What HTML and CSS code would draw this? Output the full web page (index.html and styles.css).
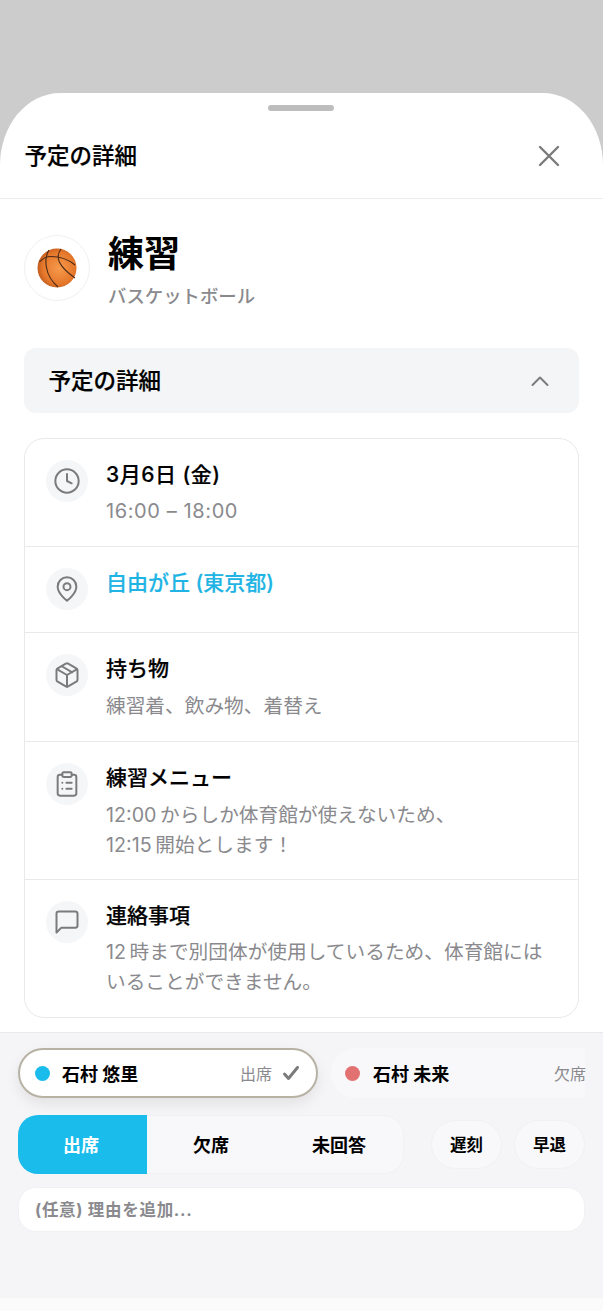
FILE: index.html
```html
<!DOCTYPE html>
<html lang="ja">
<head>
    <meta charset="UTF-8">
    <meta name="viewport" content="width=device-width, initial-scale=1.0">
    <title>予定の詳細</title>
    <link rel="stylesheet" href="styles.css">
</head>
<body>

<div class="sheet">
    <div class="grabber"></div>

    <!-- Header -->
    <header class="sheet-header">
        <h2>予定の詳細</h2>
        <svg class="close-icon" width="28" height="28" viewBox="0 0 28 28" fill="none" stroke="#7b7b7b" stroke-width="2.4" stroke-linecap="round">
            <path d="M5 5L23 23M23 5L5 23"/>
        </svg>
    </header>

    <div class="sheet-body">
        <!-- Event title -->
        <div class="event">
            <div class="event-icon">
                <svg width="40" height="40" viewBox="0 0 40 40" fill="none">
                    <defs>
                        <radialGradient id="ball" cx="0.55" cy="0.5" r="0.6">
                            <stop offset="0" stop-color="#f79a4c"/>
                            <stop offset="0.7" stop-color="#e5772a"/>
                            <stop offset="1" stop-color="#b4501a"/>
                        </radialGradient>
                    </defs>
                    <ellipse cx="20" cy="20" rx="19.500" ry="19.500" fill="url(#ball)"/>
                    <g stroke="#4a2a17" stroke-width="1.100">
                        <path d="M2.500 14C6 10 10 8.500 14 8.500C22 8.500 31 11 38 17"/>
                        <path d="M12 2C7 10 7 27 21 39"/>
                        <path d="M24 1C18 9 21 18 38 30"/>
                    </g>
                </svg>
            </div>
            <div>
                <h1>練習</h1>
                <p class="event-sub">バスケットボール</p>
            </div>
        </div>

        <!-- Collapsible section -->
        <div class="section-head">
            <span class="section-title">予定の詳細</span>
            <svg width="22" height="22" viewBox="0 0 22 22" fill="none" stroke="#7b7b7b" stroke-width="2" stroke-linecap="round" stroke-linejoin="round">
                <path d="M3.500 15L11 7.500L18.500 15"/>
            </svg>
        </div>

        <div class="card">
            <div class="row row-date">
                <div class="row-icon">
                    <svg width="28" height="28" viewBox="0 0 24 24" fill="none" stroke="#7b7b7b" stroke-width="1.700" stroke-linecap="round" stroke-linejoin="round">
                        <circle cx="12" cy="12" r="10"/>
                        <path d="M12 6v6l4 2"/>
                    </svg>
                </div>
                <div>
                    <div class="row-title">3月6日 (金)</div>
                    <div class="row-text">16:00 – 18:00</div>
                </div>
            </div>
            <div class="row row-place">
                <div class="row-icon">
                    <svg width="28" height="28" viewBox="0 0 24 24" fill="none" stroke="#7b7b7b" stroke-width="1.700" stroke-linecap="round" stroke-linejoin="round">
                        <path d="M20 10c0 6-8 12-8 12s-8-6-8-12a8 8 0 0 1 16 0z"/>
                        <circle cx="12" cy="10" r="3"/>
                    </svg>
                </div>
                <div class="row-title row-link">自由が丘 (東京都)</div>
            </div>
            <div class="row row-items">
                <div class="row-icon">
                    <svg width="28" height="28" viewBox="0 0 24 24" fill="none" stroke="#7b7b7b" stroke-width="1.700" stroke-linecap="round" stroke-linejoin="round">
                        <path d="M21 16V8a2 2 0 0 0-1-1.730l-7-4a2 2 0 0 0-2 0l-7 4A2 2 0 0 0 3 8v8a2 2 0 0 0 1 1.730l7 4a2 2 0 0 0 2 0l7-4A2 2 0 0 0 21 16z"/>
                        <path d="M3.300 7L12 12l8.700-5M12 22V12M7.500 4.500l9 5.200"/>
                    </svg>
                </div>
                <div>
                    <div class="row-title">持ち物</div>
                    <div class="row-text">練習着、飲み物、着替え</div>
                </div>
            </div>
            <div class="row row-menu">
                <div class="row-icon">
                    <svg width="28" height="28" viewBox="0 0 24 24" fill="none" stroke="#7b7b7b" stroke-width="1.700" stroke-linecap="round" stroke-linejoin="round">
                        <path d="M16 4h2a2 2 0 0 1 2 2v14a2 2 0 0 1-2 2H6a2 2 0 0 1-2-2V6a2 2 0 0 1 2-2h2"/>
                        <rect x="8" y="2" width="8" height="4" rx="1"/>
                        <path d="M8 11h.01M8 16h.01M11.500 11H16M11.500 16H16"/>
                    </svg>
                </div>
                <div>
                    <div class="row-title">練習メニュー</div>
                    <div class="row-text">12:00 からしか体育館が使えないため、<br>12:15 開始とします！</div>
                </div>
            </div>
            <div class="row row-note">
                <div class="row-icon">
                    <svg width="28" height="28" viewBox="0 0 24 24" fill="none" stroke="#7b7b7b" stroke-width="1.700" stroke-linecap="round" stroke-linejoin="round">
                        <path d="M21 15a2 2 0 0 1-2 2H7l-4 4V5a2 2 0 0 1 2-2h14a2 2 0 0 1 2 2z"/>
                    </svg>
                </div>
                <div>
                    <div class="row-title">連絡事項</div>
                    <div class="row-text">12 時まで別団体が使用しているため、体育館にはいることができません。</div>
                </div>
            </div>
        </div>
    </div>

    <!-- Attendance panel -->
    <div class="panel">
        <div class="members">
            <div class="member member-active">
                <span class="dot dot-blue"></span>
                <span class="member-name">石村 悠里</span>
                <span class="member-status">出席</span>
                <svg width="18" height="16" viewBox="0 0 18 16" fill="none" stroke="#7b7b7b" stroke-width="3" stroke-linecap="round" stroke-linejoin="round">
                    <path d="M2.500 9L6.500 13.500L15.500 2.500"/>
                </svg>
            </div>
            <div class="member">
                <span class="dot dot-red"></span>
                <span class="member-name">石村 未来</span>
                <span class="member-status">欠席</span>
            </div>
        </div>

        <div class="answers">
            <div class="segment">
                <button class="seg-btn seg-on">出席</button>
                <button class="seg-btn">欠席</button>
                <button class="seg-btn">未回答</button>
            </div>
            <button class="pill">遅刻</button>
            <button class="pill">早退</button>
        </div>

        <input class="reason" type="text" placeholder="(任意) 理由を追加...">
    </div>
    <div class="sheet-foot"></div>
</div>

</body>
</html>
```

FILE: styles.css
```css
html, body {
    height: 100%;
}
body {
    font-family: Inter, "Noto Sans CJK JP", sans-serif;
    background-color: #cccccc;
    margin: 0;
    padding: 93px 0 0;
    box-sizing: border-box;
    color: #000;
    overflow: hidden;
}
.sheet {
    height: 1218px;
    background-color: #fff;
    border-radius: 60px 60px 0 0 / 72px 72px 0 0;
    position: relative;
    display: flex;
    flex-direction: column;
    overflow: hidden;
}
.grabber {
    position: absolute;
    top: 12px;
    left: 268px;
    width: 66px;
    height: 6px;
    border-radius: 3px;
    background-color: #bdbdbd;
}
.sheet-header {
    height: 106px;
    box-sizing: border-box;
    padding: 33px 40px 0 24.500px;
    border-bottom: 1px solid #ececee;
    display: flex;
    justify-content: space-between;
}
.sheet-header h2 {
    margin: 0;
    font-size: 22.500px;
    font-weight: 500;
    -webkit-text-stroke: 0.2px #000;
    line-height: 60px;
    height: 60px;
}
.close-icon {
    margin-top: 16px;
}
.sheet-body {
    padding: 36px 24px 0;
    flex: none;
    height: 833px;
    box-sizing: border-box;
}
.event {
    display: flex;
    gap: 18px;
    height: 113px;
}
.event-icon {
    width: 66px;
    height: 66px;
    box-sizing: border-box;
    border: 1px solid #f0f0f2;
    border-radius: 50%;
    display: flex;
    align-items: center;
    justify-content: center;
}
.event h1 {
    margin: -3px 0 0;
    font-size: 36px;
    font-weight: 700;
    line-height: 44px;
}
.event-sub {
    margin: 7px 0 0;
    font-size: 18.400px;
    font-weight: 500;
    line-height: 26px;
    color: #8a8a8e;
}
.section-head {
    height: 65px;
    padding: 0 28px 0 24.500px;
    background-color: #f4f5f7;
    border-radius: 12px;
    display: flex;
    align-items: center;
    justify-content: space-between;
    margin-bottom: 25px;
}
.section-title {
    font-size: 22.500px;
    font-weight: 500;
    -webkit-text-stroke: 0.2px #000;
    margin-bottom: 3px;
}
.card {
    height: 580px;
    box-sizing: border-box;
    border: 1px solid #e8e9eb;
    border-radius: 20px;
}
.row {
    display: flex;
    gap: 18px;
    padding: 21px 21px 0;
    box-sizing: border-box;
    border-bottom: 1px solid #e8e9eb;
}
.row:last-child {
    border-bottom: none;
}
.row-date { height: 108px; }
.row-place { height: 86px; }
.row-items { height: 109px; }
.row-menu { height: 138px; }
.row-note { height: 138px; }
.row-icon {
    flex: none;
    width: 42px;
    height: 42px;
    border-radius: 50%;
    background-color: #f5f6f8;
    display: flex;
    align-items: center;
    justify-content: center;
}
.row-title {
    font-size: 21px;
    font-weight: 500;
    -webkit-text-stroke: 0.2px currentColor;
    line-height: 30px;
}
.row-date .row-title {
    letter-spacing: 0.500px;
}
.row-link {
    color: #1fb4e4;
}
.row-text {
    margin-top: 8px;
    font-size: 19.700px;
    word-spacing: -2px;
    line-height: 29.500px;
    color: #8a8a8e;
}
.row-date .row-text {
    margin-top: 7px;
    font-size: 20px;
    word-spacing: 0;
    letter-spacing: 0.600px;
}
.row-note .row-text {
    margin-top: 7px;
}
.panel {
    flex: none;
    height: 266px;
    box-sizing: border-box;
    border-top: 1px solid #e8e9eb;
    background-color: #f5f5f8;
    padding: 15px 18px 0;
}
.sheet-foot {
    flex: 1;
    background-color: #fbfbfc;
}
.members {
    display: flex;
    gap: 13px;
    height: 50px;
}
.member {
    flex: none;
    box-sizing: border-box;
    width: 254px;
    height: 50px;
    padding: 0 0 0 14px;
    border-radius: 25px 0 0 25px;
    background-color: #f8f8fa;
    display: flex;
    align-items: center;
    font-size: 18px;
}
.member-active {
    width: 300px;
    padding: 0 16px 0 15px;
    border-radius: 25px;
    background-color: #fff;
    border: 2px solid #b8b2a4;
    box-shadow: 0 6px 14px rgba(0, 0, 0, 0.08);
}
.dot {
    width: 15px;
    height: 15px;
    border-radius: 50%;
    margin-right: 13px;
}
.member-active .dot {
    margin-right: 12px;
}
.dot-blue { background-color: #1abcec; }
.dot-red { background-color: #e27272; }
.member-name {
    font-weight: 700;
    flex: 1;
}
.member-status {
    font-size: 16px;
    color: #8a8a8e;
    margin-right: -1px;
}
.member-active .member-status {
    margin-right: 10px;
}
.answers {
    display: flex;
    align-items: center;
    margin-top: 17px;
    gap: 13px;
}
.segment {
    width: 386px;
    height: 59px;
    box-sizing: border-box;
    margin-right: 14px;
    border: 1px solid #f0f1f3;
    border-radius: 20px;
    background-color: #f8f8fa;
    display: grid;
    grid-template-columns: 128px 128px 1fr;
}
.seg-btn {
    border: none;
    background: none;
    padding: 0 0 2px;
    font-family: inherit;
    font-size: 18px;
    font-weight: 700;
    color: #000;
}
.seg-on {
    margin: -1px 0 -1px -1px;
    padding: 0 3px 2px 0;
    border-radius: 20px 0 0 20px;
    background-color: #1abcec;
    color: #fff;
}
.pill {
    width: 71px;
    height: 49px;
    border: 1px solid #f0f1f3;
    border-radius: 25px;
    background-color: #f8f8fa;
    padding: 0 0 2px;
    font-family: inherit;
    font-size: 16.500px;
    font-weight: 700;
    color: #000;
}
.pill:first-of-type {
    margin-right: -1px;
}
.reason {
    display: block;
    width: 567px;
    height: 45px;
    box-sizing: border-box;
    margin-top: 13px;
    padding: 0 16px;
    border: 1px solid #f0f1f3;
    border-radius: 18px;
    background-color: #fff;
    font-family: inherit;
    font-size: 16.500px;
    font-weight: 700;
    letter-spacing: 0.700px;
}
.reason::placeholder {
    color: #8a8a8e;
}
```
